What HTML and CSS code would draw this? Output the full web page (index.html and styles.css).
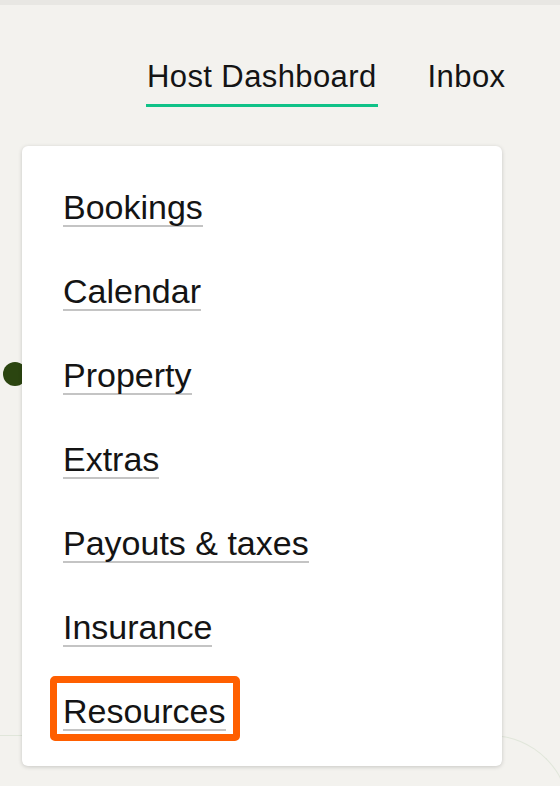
FILE: index.html
```html
<!DOCTYPE html>
<html lang="en">
<head>
<meta charset="utf-8">
<title>Host Dashboard menu</title>
<link rel="stylesheet" href="styles.css">
</head>
<body>
<div class="topbar"></div>
<div class="page">
  <div class="bg-shape"></div>
  <span class="dot"></span>
  <nav class="nav">
    <a class="nav-item active" href="#">Host Dashboard</a>
    <a class="nav-item" href="#">Inbox</a>
  </nav>
  <div class="menu">
    <a class="menu-link" href="#">Bookings</a>
    <a class="menu-link" href="#">Calendar</a>
    <a class="menu-link" href="#">Property</a>
    <a class="menu-link" href="#">Extras</a>
    <a class="menu-link" href="#">Payouts &amp; taxes</a>
    <a class="menu-link" href="#">Insurance</a>
    <a class="menu-link highlight" href="#">Resources</a>
  </div>
</div>
</body>
</html>
```
FILE: styles.css
```css
* { box-sizing: border-box; }
html, body {
  margin: 0;
  padding: 0;
  background: #f3f2ee;
  font-family: "Liberation Sans", Arial, sans-serif;
  color: #141414;
  overflow: hidden;
}
.topbar {
  height: 5px;
  background: #e8e7e3;
}
.page {
  position: relative;
  height: 781px;
  padding-top: 52px;
  overflow: hidden;
}
.bg-shape {
  position: absolute;
  left: -10px;
  top: 730px;
  width: 580px;
  height: 200px;
  border-top: 1.5px solid #e0e6da;
  border-right: 1.5px solid #e0e6da;
  border-top-right-radius: 80px;
}
.dot {
  position: absolute;
  left: 3px;
  top: 357px;
  width: 24px;
  height: 24px;
  border-radius: 50%;
  background: #2b4510;
}
.nav {
  display: flex;
  align-items: flex-start;
  gap: 49px;
  padding-left: 146px;
}
.nav-item {
  font-size: 31px;
  line-height: 40px;
  color: #141414;
  text-decoration: none;
  padding: 0 1px 7px;
  border-bottom: 3px solid transparent;
  letter-spacing: 0.4px;
}
.nav-item.active {
  border-bottom-color: #0fc287;
}
.menu {
  position: relative;
  margin: 39px 0 0 22px;
  width: 480px;
  height: 620px;
  background: #fff;
  border-radius: 6px;
  box-shadow: 0 1px 4px rgba(0, 0, 0, 0.18);
  padding: 43px 0 35px 41px;
  display: flex;
  flex-direction: column;
  align-items: flex-start;
  gap: 46px;
}
.menu-link {
  position: relative;
  display: inline-block;
  font-size: 34px;
  line-height: 36px;
  color: #141414;
  text-decoration: none;
  border-bottom: 2px solid #c4c4c4;
}
.highlight::after {
  content: "";
  position: absolute;
  left: -13px;
  right: -14px;
  top: -17px;
  bottom: -12px;
  border: 7px solid #ff5f00;
  border-radius: 5px;
}
```
